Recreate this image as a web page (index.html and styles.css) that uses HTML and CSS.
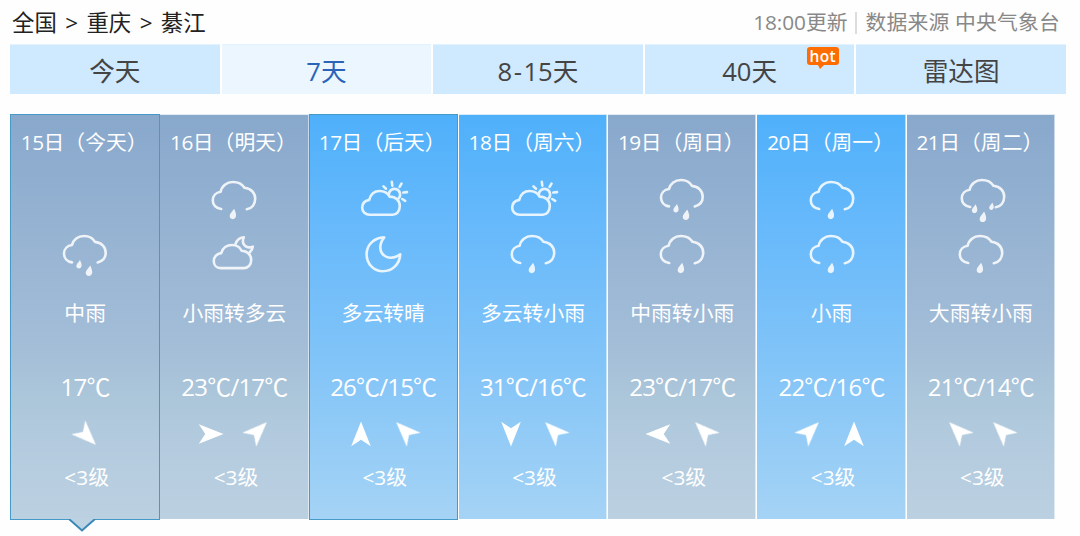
FILE: index.html
```html
<!DOCTYPE html>
<html lang="zh-CN">
<head>
    <meta charset="UTF-8">
    <meta name="viewport" content="width=device-width, initial-scale=1.0">
    <title>綦江天气预报</title>
    <link rel="stylesheet" href="styles.css">
</head>
<body>

<!-- Shared icon shapes -->
<svg class="sprite" width="0" height="0">
    <symbol id="drop" viewBox="0 0 8 11" overflow="visible">
        <path d="M5.2 0C6.6 3 7.4 5 7.2 7.2C7 9.4 5.6 10.6 3.8 10.6C2 10.6 .6 9.3 .7 7.2C.9 4.8 3.4 3 5.2 0Z" fill="#fff" stroke="none"/>
    </symbol>
    <g id="cloud">
        <path d="M17.2 37C11.8 36.2 8.8 32.7 8.8 28.5C8.8 24 12 20.5 16.6 19.8C17.8 13.8 22.8 10 28.8 10C34 10 38.3 12.2 40.5 15.8C46.8 16.4 51.2 20.8 51.2 26.5C51.2 32 48 36.3 42.8 37.3"/>
    </g>
    <g id="light-rain">
        <use href="#cloud"/>
        <use href="#drop" x="25" y="36.8" width="7.8" height="10.8"/>
    </g>
    <g id="mid-rain">
        <path d="M17 34.4C12 33.6 9 30 9 25.6C9 21 12.4 17.6 17 17C18.2 11.6 23 8 29 8C34 8 38 10.2 40 13.9C46.3 14.5 50.7 19 50.7 24.7C50.7 29.6 47.6 33.2 42.7 34.4"/>
        <use href="#drop" x="20.8" y="32" width="6.4" height="8.8"/>
        <use href="#drop" x="30" y="37.4" width="8" height="11"/>
    </g>
    <g id="heavy-rain">
        <use href="#cloud" x="2" y="-2"/>
        <use href="#drop" x="20.2" y="32.2" width="6.8" height="9.2"/>
        <use href="#drop" x="27.9" y="39.4" width="8" height="11.2"/>
        <use href="#drop" x="37.6" y="30.6" width="5.8" height="7.6"/>
    </g>
    <g id="cloudy-day">
        <path d="M16.8 42.7C12.4 42.7 9.2 39.8 9.2 35.8C9.2 31.4 12 28.7 16.2 27.9C17.6 22.4 21.6 19 26.6 19C31.4 19 34.6 21 36.6 24.6C42.6 24.6 46.8 28.6 46.8 34C46.8 39.2 43.6 42.7 39.8 42.7Z"/>
        <path d="M35.9 22.7A5.6 5.6 0 1 1 45.4 26.5"/>
        <path d="M30.5 14.4L33 16.7M38.8 9.8L39.3 13.6M48.5 11.6L46.6 14.8M50.3 20.5L54 20.1M49.2 27L52.2 28.9"/>
    </g>
    <g id="cloudy-night">
        <path d="M16.6 40.1C12.6 40.1 9.8 37.2 9.8 33.2C9.8 28.8 12.8 25.7 17.2 25.1C18.6 20 23 17 28 17C32.6 17 36 19.2 37.6 22.8C43.4 23 47.2 26.8 47.2 32C47.2 36.8 44 40.1 40 40.1Z"/>
        <path class="thin" d="M31.4 16.2C32.6 12.4 35.6 9.6 39.8 9.2C37.4 14.6 40.4 21.6 48.8 18.6C48.6 20.8 47.6 22.6 45.8 24.2"/>
    </g>
    <g id="moon">
        <path d="M31.2 9.4C21 9.6 13.6 16.8 13.6 26.2C13.6 36 20.8 43.2 30 43.2C39.4 43.2 46.8 36 47.2 26.4C37 33.4 27.4 28.2 27.3 19.6C27.3 15.6 28.8 12.4 31.2 9.4Z"/>
    </g>
    <g id="arrow">
        <path d="M15 2.6L24.8 27.2L15 20.8L5.2 27.2Z"/>
    </g>
</svg>

<div class="header">
    <div class="crumbs">全国 <i>&gt;</i> 重庆 <i>&gt;</i> 綦江</div>
    <div class="source"><span>18:00更新</span><span class="bar"></span><span class="from">数据来源 中央气象台</span></div>
</div>

<div class="tabs">
    <div class="tab">今天</div>
    <div class="tab on">7天</div>
    <div class="tab">8<i>-</i>15天</div>
    <div class="tab">40天<span class="hot">hot</span></div>
    <div class="tab">雷达图</div>
</div>

<div class="days">
    <div class="day grey framed today">
        <div class="date"><b>15</b>日（今天）</div>
        <svg class="icon" viewBox="0 0 60 56"></svg>
        <svg class="icon" viewBox="0 0 60 56"><use href="#mid-rain"/></svg>
        <div class="weather">中雨</div>
        <div class="temp">17<b>℃</b></div>
        <div class="wind"><svg class="se" viewBox="0 0 30 30"><use href="#arrow"/></svg></div>
        <div class="level">&lt;3级</div>
        <svg class="pointer" viewBox="0 0 28 13"><path class="fill" d="M1 0H27L14 12Z"/><path d="M1 0L14 11.5L27 0"/></svg>
    </div>
    <div class="day grey">
        <div class="date"><b>16</b>日（明天）</div>
        <svg class="icon" viewBox="0 0 60 56"><use href="#light-rain"/></svg>
        <svg class="icon" viewBox="0 0 60 56"><use href="#cloudy-night"/></svg>
        <div class="weather">小雨转多云</div>
        <div class="temp">23<b>℃</b>/17<b>℃</b></div>
        <div class="wind">
            <svg class="e" viewBox="0 0 30 30"><use href="#arrow"/></svg>
            <svg class="ne" viewBox="0 0 30 30"><use href="#arrow"/></svg>
        </div>
        <div class="level">&lt;3级</div>
    </div>
    <div class="day blue framed">
        <div class="date"><b>17</b>日（后天）</div>
        <svg class="icon" viewBox="0 0 60 56"><use href="#cloudy-day"/></svg>
        <svg class="icon" viewBox="0 0 60 56"><use href="#moon"/></svg>
        <div class="weather">多云转晴</div>
        <div class="temp">26<b>℃</b>/15<b>℃</b></div>
        <div class="wind">
            <svg class="n" viewBox="0 0 30 30"><use href="#arrow"/></svg>
            <svg class="nw" viewBox="0 0 30 30"><use href="#arrow"/></svg>
        </div>
        <div class="level">&lt;3级</div>
    </div>
    <div class="day blue">
        <div class="date"><b>18</b>日（周六）</div>
        <svg class="icon" viewBox="0 0 60 56"><use href="#cloudy-day"/></svg>
        <svg class="icon" viewBox="0 2 60 56"><use href="#light-rain"/></svg>
        <div class="weather">多云转小雨</div>
        <div class="temp">31<b>℃</b>/16<b>℃</b></div>
        <div class="wind">
            <svg class="s" viewBox="0 0 30 30"><use href="#arrow"/></svg>
            <svg class="nw" viewBox="0 0 30 30"><use href="#arrow"/></svg>
        </div>
        <div class="level">&lt;3级</div>
    </div>
    <div class="day grey">
        <div class="date"><b>19</b>日（周日）</div>
        <svg class="icon" viewBox="0 0 60 56"><use href="#mid-rain"/></svg>
        <svg class="icon" viewBox="0 2 60 56"><use href="#light-rain"/></svg>
        <div class="weather">中雨转小雨</div>
        <div class="temp">23<b>℃</b>/17<b>℃</b></div>
        <div class="wind">
            <svg class="w" viewBox="0 0 30 30"><use href="#arrow"/></svg>
            <svg class="nw" viewBox="0 0 30 30"><use href="#arrow"/></svg>
        </div>
        <div class="level">&lt;3级</div>
    </div>
    <div class="day blue">
        <div class="date"><b>20</b>日（周一）</div>
        <svg class="icon" viewBox="0 0 60 56"><use href="#light-rain"/></svg>
        <svg class="icon" viewBox="0 2 60 56"><use href="#light-rain"/></svg>
        <div class="weather">小雨</div>
        <div class="temp">22<b>℃</b>/16<b>℃</b></div>
        <div class="wind">
            <svg class="ne" viewBox="0 0 30 30"><use href="#arrow"/></svg>
            <svg class="n" viewBox="0 0 30 30"><use href="#arrow"/></svg>
        </div>
        <div class="level">&lt;3级</div>
    </div>
    <div class="day grey">
        <div class="date"><b>21</b>日（周二）</div>
        <svg class="icon" viewBox="0 0 60 56"><use href="#heavy-rain"/></svg>
        <svg class="icon" viewBox="0 2 60 56"><use href="#light-rain"/></svg>
        <div class="weather">大雨转小雨</div>
        <div class="temp">21<b>℃</b>/14<b>℃</b></div>
        <div class="wind">
            <svg class="nw" viewBox="0 0 30 30"><use href="#arrow"/></svg>
            <svg class="nw" viewBox="0 0 30 30"><use href="#arrow"/></svg>
        </div>
        <div class="level">&lt;3级</div>
    </div>
</div>

</body>
</html>
```
FILE: styles.css
```css
* {
    box-sizing: border-box;
}

body {
    margin: 0;
    min-height: 536px;
    background: #fefefe;
    font-family: "Open Sans", "Noto Sans CJK SC", sans-serif;
    color: #222;
}

b, i {
    font-weight: inherit;
    font-style: normal;
}

.sprite {
    display: block;
}

/* Breadcrumb and source line */
.header {
    display: flex;
    justify-content: space-between;
    height: 44px;
    padding: 0 20px 0 12px;
    line-height: 46px;
    white-space: nowrap;
}

.crumbs {
    font-size: 22.4px;
}

.crumbs i {
    margin: 0 2.6px;
}

.source {
    display: flex;
    align-items: center;
    font-size: 20.8px;
    letter-spacing: -0.05px;
    color: #888;
}

.from {
    letter-spacing: 0.2px;
}

.bar {
    width: 2px;
    height: 22px;
    margin: 2px 8px 0;
    background: #ddd;
}

/* Tabs */
.tabs {
    display: flex;
    gap: 2px;
    width: 1056px;
    height: 50px;
    margin-left: 10px;
}

.tab {
    position: relative;
    flex: 1;
    background: #cfe9ff;
    border-top: 1px solid #e2f2ff;
    color: #444;
    font-size: 25.6px;
    line-height: 53px;
    text-align: center;
}

.tab i {
    margin: 0 1.5px;
}

.tab.on {
    background: #ebf6ff;
    color: #2b63b8;
}

/* Orange badge on the 40 day tab */
.hot {
    position: absolute;
    top: 2px;
    left: 162px;
    width: 32px;
    height: 18px;
    border-radius: 3px;
    background: #ff6c00;
    color: #fff;
    font: 600 15.5px/18px "Open Sans", sans-serif;
    letter-spacing: 0.3px;
}

.hot::after {
    content: "";
    position: absolute;
    left: 11px;
    top: 18px;
    border-style: solid;
    border-width: 4px 4px 0 2px;
    border-color: #ff6c00 transparent transparent;
}

/* Seven day columns */
.days {
    display: grid;
    grid-template-columns: repeat(7, 1fr);
    width: 1045px;
    margin: 20px 0 0 10px;
}

.day {
    position: relative;
    display: flex;
    flex-direction: column;
    align-items: center;
    height: 405px;
    padding-left: 1px;
    border: 1px solid rgba(255, 255, 255, 0.55);
    border-width: 1px 1px 0;
    border-left-color: #fff;
    color: #fff;
    white-space: nowrap;
}

.grey {
    background: linear-gradient(#88a8cc, #a4bed8 58%, #adc7da 72%, #b4cbdf 82%, #bbd1e1);
}

.blue {
    background: linear-gradient(#4fb0fa, #69bafb 30%, #7fc3f8 58%, #a5d3f5);
}

.framed {
    height: 406px;
    padding-left: 0;
    border: 1px solid #459ac8;
}

.today {
    z-index: 1;
    margin-right: -1px;
}

.date {
    height: 57px;
    margin-left: -2px;
    font-size: 20.8px;
    line-height: 55px;
}

.date b {
    letter-spacing: -0.5px;
}

.icon {
    width: 60px;
    height: 56px;
    fill: none;
    stroke: #fff;
    stroke-width: 2.6;
    stroke-linecap: round;
    stroke-linejoin: round;
    opacity: 0.85;
}

.icon .thin {
    stroke-width: 2;
}

.weather {
    height: 60px;
    font-size: 20.8px;
    line-height: 59px;
}

.temp {
    height: 75px;
    font-size: 24px;
    line-height: 86px;
    letter-spacing: -0.8px;
}

.wind {
    display: flex;
    gap: 14.6px;
}

.wind svg {
    width: 30px;
    height: 30px;
    fill: #fff;
    filter: blur(0.5px);
}

.e {
    transform: translateX(-1px) rotate(90deg);
}

.s {
    transform: rotate(180deg);
}

.w {
    transform: translateX(-2px) rotate(-90deg);
}

.ne {
    transform: translate(1px, -3px) rotate(45deg);
}

.nw {
    transform: translate(-1px, -3px) rotate(-45deg);
}

.se {
    transform: translate(2px, 2px) rotate(135deg);
}

.level {
    margin-left: 3px;
    font-size: 20.8px;
    line-height: 56px;
}

/* Arrow under the selected day */
.pointer {
    position: absolute;
    left: 57px;
    top: 404px;
    width: 28px;
    height: 13px;
    fill: none;
    stroke: #3a88b8;
    stroke-width: 2;
}

.pointer .fill {
    fill: #bdd2e2;
    stroke: none;
}
```
